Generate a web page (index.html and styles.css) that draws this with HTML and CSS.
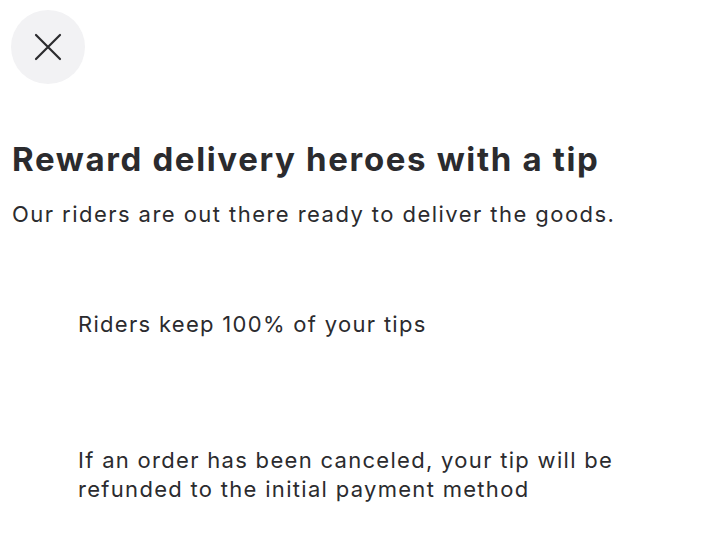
FILE: index.html
```html
<!DOCTYPE html>
<html>
  <head>
    <title>Tip riders</title>
    <link rel="stylesheet" href="styles.css">
  </head>
  <body>
    <div class="sheet">
      <button class="close" type="button" aria-label="Close">
        <svg width="28" height="28" viewBox="0 0 28 28">
          <path d="M2 2 L26 26 M26 2 L2 26" stroke="#2b2b2e" stroke-width="2.2" stroke-linecap="round" fill="none"/>
        </svg>
      </button>
      <h1 class="title">Reward delivery heroes with a tip</h1>
      <p class="subtitle">Our riders are out there ready to deliver the goods.</p>
      <ul class="points">
        <li class="point">
          <span class="point-icon"></span>
          <span class="point-text">Riders keep 100% of your tips</span>
        </li>
        <li class="point">
          <span class="point-icon"></span>
          <span class="point-text">If an order has been canceled, your tip will be refunded to the initial payment method</span>
        </li>
      </ul>
    </div>
  </body>
</html>
```

FILE: styles.css
```css
html, body {
  margin: 0;
  background: #fff;
}
body {
  font-family: Inter, "Noto Sans", sans-serif;
  color: #2b2b2e;
}

.sheet {
  padding: 10px 12px 0 12px;
}

.close {
  width: 74px;
  height: 74px;
  border-radius: 50%;
  border: none;
  background-color: #f2f2f4;
  display: flex;
  align-items: center;
  justify-content: center;
  padding: 0;
  margin: 0 0 0 -1px;
}

.title {
  font-size: 33px;
  font-weight: 700;
  letter-spacing: 1.65px;
  margin: 55px 0 0 0;
  line-height: 40px;
}

.subtitle {
  font-size: 22px;
  letter-spacing: 1.45px;
  margin: 20px 0 0 0;
  line-height: 30px;
}

.points {
  list-style: none;
  margin: 81px 0 0 0;
  padding: 0;
}

.point {
  display: flex;
  align-items: flex-start;
  gap: 18px;
  margin-bottom: 107px;
}

.point:last-child {
  margin-bottom: 0;
}

.point-icon {
  width: 48px;
  height: 28px;
  flex-shrink: 0;
}

.point-text {
  font-size: 22px;
  letter-spacing: 1.3px;
  line-height: 29px;
  max-width: 560px;
}
```
